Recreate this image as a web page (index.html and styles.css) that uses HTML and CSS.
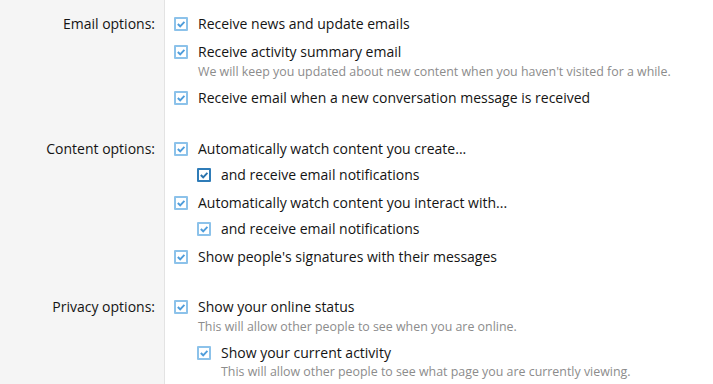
FILE: index.html
```html
<!DOCTYPE html>
<html lang="en">
<head>
    <meta charset="UTF-8">
    <title>Preferences</title>
    <link rel="stylesheet" href="styles.css">
</head>
<body>

<div class="form">
    <!-- Email options -->
    <div class="row">
        <div class="row-label">Email options:</div>
        <div class="row-input">
            <ul class="choices">
                <li>
                    <label class="choice"><span class="box"><svg viewBox="0 0 10 10"><path d="M1.8 5 L4.2 7.3 L8.4 2.9"/></svg></span>Receive news and update emails</label>
                </li>
                <li>
                    <label class="choice"><span class="box"><svg viewBox="0 0 10 10"><path d="M1.8 5 L4.2 7.3 L8.4 2.9"/></svg></span>Receive activity summary email</label>
                    <div class="hint">We will keep you updated about new content when you haven't visited for a while.</div>
                </li>
                <li>
                    <label class="choice"><span class="box"><svg viewBox="0 0 10 10"><path d="M1.8 5 L4.2 7.3 L8.4 2.9"/></svg></span>Receive email when a new conversation message is received</label>
                </li>
            </ul>
        </div>
    </div>

    <!-- Content options -->
    <div class="row">
        <div class="row-label">Content options:</div>
        <div class="row-input">
            <ul class="choices">
                <li>
                    <label class="choice"><span class="box"><svg viewBox="0 0 10 10"><path d="M1.8 5 L4.2 7.3 L8.4 2.9"/></svg></span>Automatically watch content you create...</label>
                    <ul class="choices nested">
                        <li>
                            <label class="choice"><span class="box focused"><svg viewBox="0 0 10 10"><path d="M1.8 5 L4.2 7.3 L8.4 2.9"/></svg></span>and receive email notifications</label>
                        </li>
                    </ul>
                </li>
                <li>
                    <label class="choice"><span class="box"><svg viewBox="0 0 10 10"><path d="M1.8 5 L4.2 7.3 L8.4 2.9"/></svg></span>Automatically watch content you interact with...</label>
                    <ul class="choices nested">
                        <li>
                            <label class="choice"><span class="box"><svg viewBox="0 0 10 10"><path d="M1.8 5 L4.2 7.3 L8.4 2.9"/></svg></span>and receive email notifications</label>
                        </li>
                    </ul>
                </li>
                <li>
                    <label class="choice"><span class="box"><svg viewBox="0 0 10 10"><path d="M1.8 5 L4.2 7.3 L8.4 2.9"/></svg></span>Show people's signatures with their messages</label>
                </li>
            </ul>
        </div>
    </div>

    <!-- Privacy options -->
    <div class="row">
        <div class="row-label">Privacy options:</div>
        <div class="row-input">
            <ul class="choices">
                <li>
                    <label class="choice"><span class="box"><svg viewBox="0 0 10 10"><path d="M1.8 5 L4.2 7.3 L8.4 2.9"/></svg></span>Show your online status</label>
                    <div class="hint">This will allow other people to see when you are online.</div>
                    <ul class="choices nested">
                        <li>
                            <label class="choice"><span class="box"><svg viewBox="0 0 10 10"><path d="M1.8 5 L4.2 7.3 L8.4 2.9"/></svg></span>Show your current activity</label>
                            <div class="hint">This will allow other people to see what page you are currently viewing.</div>
                        </li>
                    </ul>
                </li>
            </ul>
        </div>
    </div>
</div>

</body>
</html>
```

FILE: styles.css
```css
body {
    margin: 0;
    font-family: "Open Sans", "Noto Sans", sans-serif;
    font-size: 14px;
    color: #141414;
    background-color: #ffffff;
}
.form {
    min-height: 384px;
    padding-top: 2px;
    background: linear-gradient(to right, #f5f5f5 164px, #e3e3e3 164px, #e3e3e3 165px, #ffffff 165px);
}
.row {
    display: flex;
    padding: 12px 0 18.5px;
}
.row-label {
    width: 165px;
    box-sizing: border-box;
    padding-right: 10px;
    text-align: right;
    line-height: 20px;
    flex-shrink: 0;
}
.row-input {
    padding-left: 10px;
    flex: 1;
}
.choices {
    list-style: none;
    margin: 0;
    padding: 0;
}
.choices li + li {
    margin-top: 7.5px;
}
.nested {
    margin-left: 23px;
    margin-top: 6.5px;
}
.choice {
    display: flex;
    align-items: center;
    line-height: 20px;
    white-space: nowrap;
}
.box {
    width: 14px;
    height: 14px;
    box-sizing: border-box;
    border: 2px solid #8cc2ea;
    border-radius: 1px;
    margin-left: -1px;
    margin-right: 10px;
    flex-shrink: 0;
    display: flex;
    align-items: center;
    justify-content: center;
}
.box svg {
    width: 10px;
    height: 10px;
    fill: none;
    stroke: #4f9ddb;
    stroke-width: 1.9;
}
.box.focused {
    border-color: #2f7cb8;
}
.box.focused svg {
    stroke: #2a73ad;
}
.hint {
    margin: 1px 0 1px 23px;
    font-size: 12.4px;
    line-height: 18px;
    color: #8c8c8c;
    white-space: nowrap;
}
.nested .hint {
    margin-top: 0;
}
```
